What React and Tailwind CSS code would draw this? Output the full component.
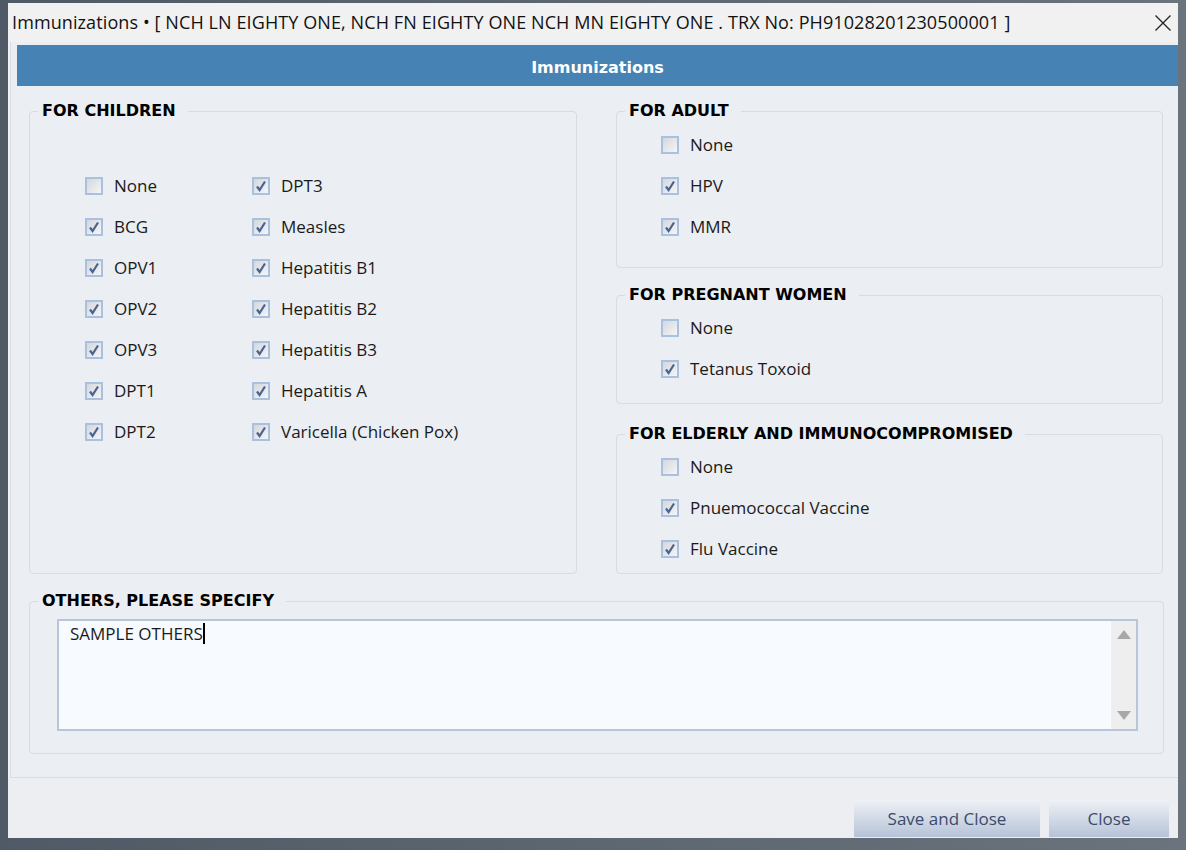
import React from 'react';

const childrenCol1 = [
  { label: 'None', checked: false },
  { label: 'BCG', checked: true },
  { label: 'OPV1', checked: true },
  { label: 'OPV2', checked: true },
  { label: 'OPV3', checked: true },
  { label: 'DPT1', checked: true },
  { label: 'DPT2', checked: true },
];

const childrenCol2 = [
  { label: 'DPT3', checked: true },
  { label: 'Measles', checked: true },
  { label: 'Hepatitis B1', checked: true },
  { label: 'Hepatitis B2', checked: true },
  { label: 'Hepatitis B3', checked: true },
  { label: 'Hepatitis A', checked: true },
  { label: 'Varicella (Chicken Pox)', checked: true },
];

const adult = [
  { label: 'None', checked: false },
  { label: 'HPV', checked: true },
  { label: 'MMR', checked: true },
];

const pregnant = [
  { label: 'None', checked: false },
  { label: 'Tetanus Toxoid', checked: true },
];

const elderly = [
  { label: 'None', checked: false },
  { label: 'Pnuemococcal Vaccine', checked: true },
  { label: 'Flu Vaccine', checked: true },
];

function CheckBox({ checked }) {
  return (
    <div className="w-[18px] h-[18px] border-2 border-[#a9c0de] bg-gradient-to-br from-[#d4d7dc] to-[#f4f5f7] flex items-center justify-center shrink-0">
      {checked && (
        <svg width="12" height="12" viewBox="0 0 12 12">
          <path d="M2 6.5 L4.6 10 L10 1.5" fill="none" stroke="#4a6390" strokeWidth="2.2" />
        </svg>
      )}
    </div>
  );
}

function CheckItem({ label, checked }) {
  return (
    <div className="h-[41px] flex items-center gap-[11px] text-[17px] text-[#1a1a1a]">
      <CheckBox checked={checked} />
      <span>{label}</span>
    </div>
  );
}

function GroupBox({ title, className, children }) {
  return (
    <div className={`relative border border-[#d6dce4] rounded-[4px] ${className}`}>
      <span className="absolute -top-[13px] left-[8px] bg-[#ebeef2] pl-[4px] pr-[12px] font-['DejaVu_Sans',sans-serif] font-bold text-[16px] leading-[24px] text-black">
        {title}
      </span>
      {children}
    </div>
  );
}

export default function App() {
  return (
    <div className="w-[1186px] h-[850px] bg-gradient-to-r from-[#4f5a66] to-[#6b737c] pt-[3px] pl-[8px] pr-[8px] pb-[12px] font-['Open_Sans',sans-serif]">
      <div className="w-full h-full bg-[#f1f1f1] flex flex-col">
        {/* title bar */}
        <div className="h-[39px] flex items-center justify-between pl-[4px] pr-[6px] shrink-0">
          <span className="text-[18px] text-[#111] tracking-[0.1px] whitespace-nowrap">
            Immunizations • [ NCH LN EIGHTY ONE, NCH FN EIGHTY ONE NCH MN EIGHTY ONE . TRX No: PH91028201230500001 ]
          </span>
          <svg width="18" height="18" viewBox="0 0 18 18">
            <path d="M1.5 1.5 L16.5 16.5 M16.5 1.5 L1.5 16.5" stroke="#222" strokeWidth="1.3" />
          </svg>
        </div>

        {/* main panel */}
        <div className="ml-[2px] h-[736px] bg-[#ebeef2] border-l border-b border-[#d8dde5] flex flex-col shrink-0">
          <div className="ml-[6px] mt-[3px] h-[41px] bg-[#4682b4] flex items-center justify-center pt-[4px]">
            <span className="font-['DejaVu_Sans',sans-serif] font-bold text-[16px] text-white">Immunizations</span>
          </div>

          <div className="pl-[18px] pr-[14px] pt-[25px] flex flex-col">
            <div className="flex gap-[39px]">
              <GroupBox title="FOR CHILDREN" className="w-[548px] h-[463px]">
                <div className="flex pl-[55px] pt-[53px]">
                  <div className="w-[167px]">
                    {childrenCol1.map((c) => (
                      <CheckItem key={c.label} {...c} />
                    ))}
                  </div>
                  <div>
                    {childrenCol2.map((c) => (
                      <CheckItem key={c.label} {...c} />
                    ))}
                  </div>
                </div>
              </GroupBox>

              <div className="w-[547px] flex flex-col">
                <GroupBox title="FOR ADULT" className="h-[157px]">
                  <div className="pl-[44px] pt-[12px]">
                    {adult.map((c) => (
                      <CheckItem key={c.label} {...c} />
                    ))}
                  </div>
                </GroupBox>
                <GroupBox title="FOR PREGNANT WOMEN" className="h-[109px] mt-[27px]">
                  <div className="pl-[44px] pt-[11px]">
                    {pregnant.map((c) => (
                      <CheckItem key={c.label} {...c} />
                    ))}
                  </div>
                </GroupBox>
                <GroupBox title="FOR ELDERLY AND IMMUNOCOMPROMISED" className="h-[140px] mt-[30px]">
                  <div className="pl-[44px] pt-[11px]">
                    {elderly.map((c) => (
                      <CheckItem key={c.label} {...c} />
                    ))}
                  </div>
                </GroupBox>
              </div>
            </div>

            <GroupBox title="OTHERS, PLEASE SPECIFY" className="h-[153px] mt-[27px]">
              <div className="ml-[27px] mr-[25px] mt-[17px] h-[112px] border-2 border-[#b9c5d8] bg-[#f7faff] flex">
                <div className="flex-1 pl-[11px] text-[17px] text-[#1a1a1a] flex items-start">
                  <span>SAMPLE OTHERS</span>
                  <span className="w-[2px] h-[21px] bg-black mt-[2px]" />
                </div>
                <div className="w-[25px] bg-[#eeeeee] flex flex-col items-center justify-between py-[9px]">
                  <svg width="14" height="9" viewBox="0 0 14 9">
                    <path d="M7 0 L14 9 L0 9 Z" fill="#a8a8a8" />
                  </svg>
                  <svg width="14" height="9" viewBox="0 0 14 9">
                    <path d="M0 0 L14 0 L7 9 Z" fill="#a8a8a8" />
                  </svg>
                </div>
              </div>
            </GroupBox>
          </div>
        </div>

        {/* footer */}
        <div className="flex-1 bg-[#eceef1] flex justify-end items-end gap-[9px] pr-[9px] pb-[1px]">
          <button className="w-[186px] h-[37px] bg-gradient-to-b from-[#eef1f6] to-[#b6c3d7] text-[17px] text-[#3c4a6b]">
            Save and Close
          </button>
          <button className="w-[120px] h-[37px] bg-gradient-to-b from-[#eef1f6] to-[#b6c3d7] text-[17px] text-[#3c4a6b]">
            Close
          </button>
        </div>
      </div>
    </div>
  );
}
